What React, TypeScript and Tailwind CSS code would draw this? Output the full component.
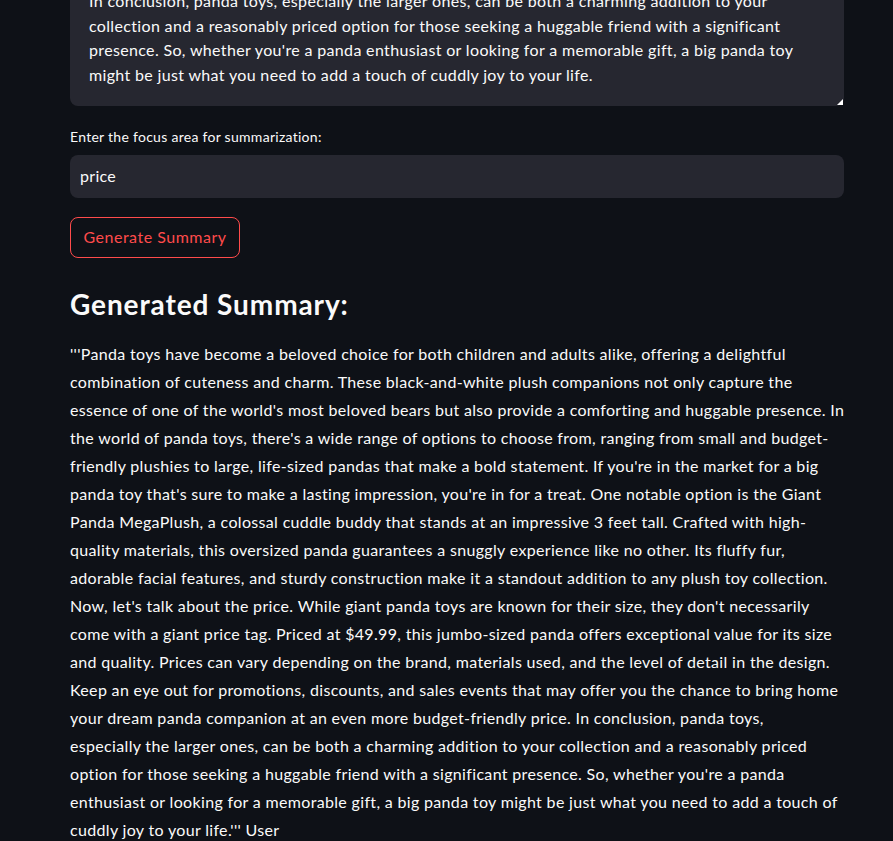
import React from "react";

const areaLines = [
  "In conclusion, panda toys, especially the larger ones, can be both a charming addition to your",
  "collection and a reasonably priced option for those seeking a huggable friend with a significant",
  "presence. So, whether you're a panda enthusiast or looking for a memorable gift, a big panda toy",
  "might be just what you need to add a touch of cuddly joy to your life.",
];

const summaryLines = [
  "'''Panda toys have become a beloved choice for both children and adults alike, offering a delightful",
  "combination of cuteness and charm. These black-and-white plush companions not only capture the",
  "essence of one of the world's most beloved bears but also provide a comforting and huggable presence. In",
  "the world of panda toys, there's a wide range of options to choose from, ranging from small and budget-",
  "friendly plushies to large, life-sized pandas that make a bold statement. If you're in the market for a big",
  "panda toy that's sure to make a lasting impression, you're in for a treat. One notable option is the Giant",
  "Panda MegaPlush, a colossal cuddle buddy that stands at an impressive 3 feet tall. Crafted with high-",
  "quality materials, this oversized panda guarantees a snuggly experience like no other. Its fluffy fur,",
  "adorable facial features, and sturdy construction make it a standout addition to any plush toy collection.",
  "Now, let's talk about the price. While giant panda toys are known for their size, they don't necessarily",
  "come with a giant price tag. Priced at $49.99, this jumbo-sized panda offers exceptional value for its size",
  "and quality. Prices can vary depending on the brand, materials used, and the level of detail in the design.",
  "Keep an eye out for promotions, discounts, and sales events that may offer you the chance to bring home",
  "your dream panda companion at an even more budget-friendly price. In conclusion, panda toys,",
  "especially the larger ones, can be both a charming addition to your collection and a reasonably priced",
  "option for those seeking a huggable friend with a significant presence. So, whether you're a panda",
  "enthusiast or looking for a memorable gift, a big panda toy might be just what you need to add a touch of",
  "cuddly joy to your life.''' User",
];

export default function App() {
  return (
    <div
      className="min-h-[841px] w-full overflow-hidden bg-[#0e1117] text-[#fafafa]"
      style={{ fontFamily: "Lato, 'Liberation Sans', sans-serif" }}
    >
      <div className="mx-[70px] w-[774px] flex flex-col">
        <div className="relative mt-[-11px] rounded-b-lg bg-[#262730] pl-[19px] pr-4 pb-[18px] text-[16px] leading-[24.7px] tracking-[0.34px]">
          {areaLines.map((l, i) => (
            <div key={i} className="whitespace-nowrap">
              {l}
            </div>
          ))}
          <svg
            className="absolute right-[1px] bottom-[1px]"
            width="6"
            height="6"
            viewBox="0 0 6 6"
          >
            <polygon points="6,0 6,6 0,6" fill="#ffffff" />
          </svg>
        </div>

        <div className="mt-[20px] text-[14px] leading-[21px] tracking-[0.28px]">
          Enter the focus area for summarization:
        </div>

        <div className="mt-[8px] flex h-[43px] items-center rounded-lg bg-[#262730] px-[10px] text-[16px] tracking-[0.3px]">
          price
        </div>

        <div className="mt-[19px]">
          <button className="flex h-[41px] w-[170px] items-center justify-center rounded-lg border border-[#ff4b4b] bg-transparent text-[16px] tracking-[0.5px] text-[#ff4b4b]">
            Generate Summary
          </button>
        </div>

        <h3 className="mt-[29px] text-[28px] font-bold leading-[34px] tracking-[0.9px]">
          Generated Summary:
        </h3>

        <div className="mt-[19px] text-[16px] leading-[28px] tracking-[0.33px]">
          {summaryLines.map((l, i) => (
            <div key={i} className="whitespace-nowrap">
              {l}
            </div>
          ))}
        </div>
      </div>
    </div>
  );
}
